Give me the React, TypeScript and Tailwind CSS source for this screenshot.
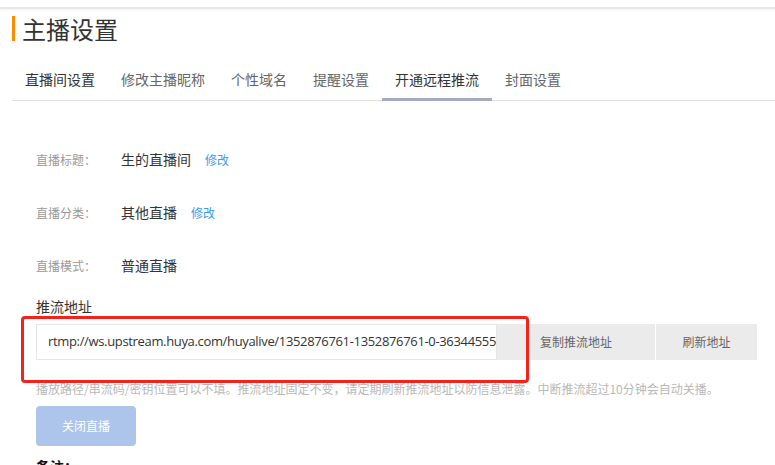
import React from "react";

const cjk = '"Noto Sans CJK SC", "Noto Sans", sans-serif';
const latin = '"Open Sans", "Noto Sans CJK SC", sans-serif';

const tabs = ["直播间设置", "修改主播昵称", "个性域名", "提醒设置", "开通远程推流", "封面设置"];

function InfoRow({ label, value, link }: { label: string; value: string; link?: boolean }) {
  return (
    <div className="flex h-[53px] items-center">
      <span className="w-[85px] text-[12px] text-[#999]">{label}</span>
      <span className="text-[14px] text-[#333]">{value}</span>
      {link && <span className="ml-[14px] text-[12px] text-[#3a9bf5] cursor-pointer">修改</span>}
    </div>
  );
}

export default function App() {
  return (
    <div className="w-[775px] h-[465px] overflow-hidden bg-white" style={{ fontFamily: cjk }}>
      <div className="mt-[7px] border-t-2 border-[#e8e8e8]" />
      <div className="h-[3px] bg-gradient-to-b from-[#f6f6f6] to-white" />
      <div className="ml-[12px] mt-[4px] flex h-[25px] items-center border-l-[3px] border-[#ff8a00] pl-[7px]">
        <span className="text-[24px] leading-[25px] text-[#333]">主播设置</span>
      </div>
      <div className="ml-[12px] mt-[17px] flex border-b border-[#e1e1e1]">
        {tabs.map((t, i) => {
          const active = i === 4;
          return (
            <div
              key={t}
              className={`-mb-px flex h-[43px] items-center px-[13px] pt-[2px] text-[14px] border-b-[3px] ${
                active ? "border-[#a5abbe] text-[#333]" : i === 0 ? "border-transparent text-[#333]" : "border-transparent text-[#666]"
              }`}
            >
              {t}
            </div>
          );
        })}
      </div>
      <div className="pl-[36px] pt-[32px]">
        <InfoRow label="直播标题：" value="生的直播间" link />
        <InfoRow label="直播分类：" value="其他直播" link />
        <InfoRow label="直播模式：" value="普通直播" />
        <div className="mt-[4px] h-[20px] text-[14px] leading-[20px] text-[#333]">推流地址</div>
        <div className="relative mt-[8px] flex h-[36px]">
          <div
            className="flex w-[461px] items-center overflow-hidden whitespace-nowrap border border-[#e6e6e6] bg-white pl-[11px] text-[13px] tracking-[-0.34px] text-[#333]"
            style={{ fontFamily: latin }}
          >
            rtmp://ws.upstream.huya.com/huyalive/1352876761-1352876761-0-36344555
          </div>
          <div className="flex w-[158px] items-center justify-center bg-[#ebebeb] text-[12px] text-[#666]">复制推流地址</div>
          <div className="ml-px flex w-[101px] items-center justify-center bg-[#ebebeb] text-[12px] text-[#666]">刷新地址</div>
          <div className="pointer-events-none absolute left-[-15px] top-[-8px] h-[67px] w-[508px] rounded-[4px] border-[3px] border-[#f5221b]" />
        </div>
        <div className="mt-[20px] h-[18px] whitespace-nowrap text-[12px] leading-[18px] text-[#b8b8b8]">
          播放路径/串流码/密钥位置可以不填。推流地址固定不变，请定期刷新推流地址以防信息泄露。中断推流超过10分钟会自动关播。
        </div>
        <div className="mt-[8px] flex h-[40px] w-[100px] items-center justify-center rounded-[4px] bg-[#adc5ea] text-[12px] text-white">
          关闭直播
        </div>
        <div className="mt-[10px] text-[14px] leading-[20px] font-bold text-[#111]">备注：</div>
      </div>
    </div>
  );
}
